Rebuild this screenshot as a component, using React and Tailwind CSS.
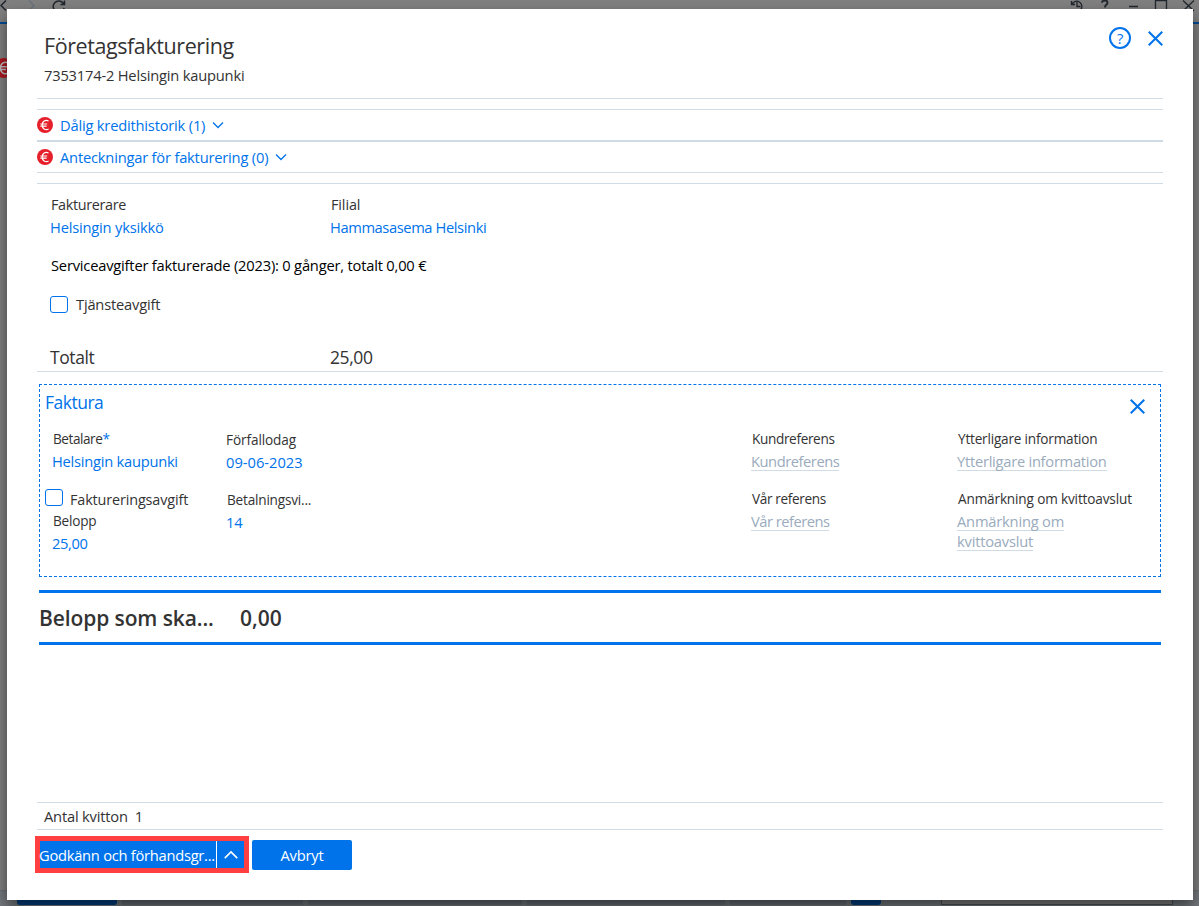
import React from "react";

const EuroBadge = ({ className }) => (
  <svg viewBox="0 0 16 16" className={className}>
    <circle cx="8" cy="8" r="8" fill="#e6202a" />
    <path d="M11.6 4C8.4 2.3 5.2 4.2 5.2 8C5.2 11.8 8.4 13.7 11.6 12M3.4 7H10.2M3.4 9.1H9.6" fill="none" stroke="#fff" strokeWidth="1.2" />
  </svg>
);

const Chevron = ({ className }) => (
  <svg viewBox="0 0 12 8" className={className} fill="none" stroke="currentColor" strokeWidth="1.3">
    <path d="M1 1.5L6 6.5L11 1.5" />
  </svg>
);

const Cross = ({ className }) => (
  <svg viewBox="0 0 16 16" className={className} fill="none" stroke="currentColor" strokeWidth="2.2">
    <path d="M.8 .8L15.2 15.2M15.2 .8L.8 15.2" />
  </svg>
);

const T = ({ className = "", children }) => (
  <span className={`block w-max shrink-0 whitespace-nowrap ${className}`}>{children}</span>
);

const Checkbox = ({ className = "" }) => (
  <span className={`block h-[17px] w-[18px] shrink-0 rounded-[3px] border border-[#0073ea] ${className}`} />
);

// Application window that stays dimmed behind the dialog
const Backdrop = () => (
  <div className="flex h-[906px] w-[1199px] flex-col bg-[#808080]">
    <div className="flex h-[24px] items-start justify-between border-b-2 border-[#004a93] text-[#222]">
      <svg width="70" height="20" viewBox="0 0 70 20" fill="none" strokeWidth="1.5">
        <path d="M6 .5L1 5.5L6 10.5" stroke="#20262d" />
        <path d="M29 .5L34 5.5L29 10.5" stroke="#6a727d" />
        <path d="M63.5 3.5A5.6 5.6 0 1 0 64.2 8M64.5 .5V4.5H60.5" stroke="#20262d" />
      </svg>
      <svg width="130" height="20" viewBox="0 0 130 20" fill="none" stroke="#20262d" strokeWidth="1.3">
        <path d="M2.5 1V4.5H6M3 4.2A5.2 5.2 0 1 1 3.5 9.5M8 2V6.5H11.5" />
        <path d="M33 2.8Q33 .5 36 .5Q38.5 .5 38.5 2.7Q38.5 4 37 5Q36 5.8 36 7.5" strokeWidth="1.8" />
        <path d="M60 6.5H69M86.5 .5H97.5V12H86.5ZM114 .5L125 11M125 .5L114 11" />
      </svg>
    </div>
    <div className="h-[866px] pt-[34px]">
      <EuroBadge className="-ml-[6px] h-[20px] w-[20px] brightness-75" />
    </div>
    <div className="flex h-[16px] border-t border-[#6b7074] bg-[#74797d] pl-[17px]">
      <div className="h-[14px] w-[100px] rounded-b-[3px] bg-[#003f80]" />
      <div className="ml-[5px] h-[14px] w-[181px] bg-[#656d75]" />
      <div className="ml-[5px] h-[14px] w-[214px] bg-[#656d75]" />
      <div className="ml-[5px] h-[14px] w-[198px] bg-[#656d75]" />
      <div className="ml-[5px] h-[14px] w-[116px] bg-[#656d75]" />
      <div className="ml-[5px] h-[14px] w-[30px] rounded-b-[3px] bg-[#003f80]" />
      <div className="ml-[60px] h-[14px] w-[232px] border border-[#4b5055] bg-[#808080]" />
    </div>
  </div>
);

const Placeholder = ({ className = "", children }) => (
  <span className={`block h-[19px] w-max border-b border-[#cfdce6] text-[14.7px] leading-[18px] whitespace-nowrap text-[#9aabbd] ${className}`}>
    {children}
  </span>
);

const App = () => {
  return (
    <div className="relative h-[906px] w-[1199px] overflow-hidden font-['Open_Sans',sans-serif] text-[14.7px] leading-[20px] tracking-[-0.2px] text-[#333]">
      <Backdrop />
      <div className="absolute top-[9px] left-[7px] flex h-[891px] w-[1186px] flex-col bg-white px-[30px] shadow-[0_7px_14px_0_rgba(0,0,0,0.5)]">
        <header className="flex h-[89px] justify-between pt-[18px] pl-[7px]">
          <div>
            <T className="text-[21.5px] leading-[38px] tracking-[-0.42px]">Företagsfakturering</T>
            <T>7353174-2 Helsingin kaupunki</T>
          </div>
          <div className="flex gap-[17px] text-[#0073ea]">
            <span className="flex size-[22px] items-center justify-center rounded-full border-2 border-[#0073ea] text-[14.7px]">?</span>
            <Cross className="mt-[4px] size-[15px]" />
          </div>
        </header>

        {/* Notices */}
        <div className="h-[11px] border-t border-[#cfdce6]" />
        <div className="flex h-[32px] items-center border-y border-[#cfdce6] text-[#0073ea]">
          <EuroBadge className="size-[16px]" />
          <T className="ml-[7px]">Dålig kredithistorik (1)</T>
          <Chevron className="ml-[7px] h-[8px] w-[12px]" />
        </div>
        <div className="flex h-[32px] items-center border-y border-[#cfdce6] text-[#0073ea]">
          <EuroBadge className="size-[16px]" />
          <T className="ml-[7px]">Anteckningar för fakturering (0)</T>
          <Chevron className="ml-[7px] h-[8px] w-[12px]" />
        </div>

        {/* Billing unit */}
        <section className="mt-[10px] h-[189px] border-y border-[#cfdce6] pt-[11px] pl-[13px]">
          <div className="grid grid-cols-[280px_1fr]">
            <T className="ml-px text-[14.4px] tracking-[-0.35px]">Fakturerare</T>
            <T className="ml-px text-[14.4px] tracking-[-0.1px]">Filial</T>
            <T className="mt-[2px] text-[#0073ea]">Helsingin yksikkö</T>
            <T className="mt-[2px] tracking-[-0.4px] text-[#0073ea]">Hammasasema Helsinki</T>
          </div>
          <T className="mt-[18px] ml-px text-black">Serviceavgifter fakturerade (2023): 0 gånger, totalt 0,00 €</T>
          <div className="mt-[19px] flex items-start gap-[8px]">
            <Checkbox className="mt-[2px]" />
            <T>Tjänsteavgift</T>
          </div>
          <div className="mt-[32px] grid grid-cols-[280px_1fr] text-[17.5px] leading-[22px] tracking-[-0.4px]">
            <T>Totalt</T>
            <T>25,00</T>
          </div>
        </section>

        {/* Invoice card */}
        <section className="mx-[2px] mt-[12px] h-[193px] border border-dashed border-[#0073ea] px-[5px] pt-[6px]">
          <div className="flex justify-between pr-[10px] text-[#0073ea]">
            <T className="text-[17.5px] leading-[22px] tracking-[-0.5px]">Faktura</T>
            <Cross className="mt-[8px] size-[15px]" />
          </div>
          <div className="grid grid-cols-[174px_525px_206px_1fr] pt-[15px] pl-[7px] text-[13.6px]">
            <div>
              <T className="ml-px tracking-[-0.45px]">
                Betalare<span className="text-[#0073ea]">*</span>
              </T>
              <T className="mt-[2px] text-[14.7px] tracking-[-0.25px] text-[#0073ea]">Helsingin kaupunki</T>
              <div className="mt-[18px] -ml-[7px] flex gap-[7px]">
                <Checkbox />
                <T className="mt-px text-[14.4px] tracking-[-0.13px]">Faktureringsavgift</T>
              </div>
              <T className="mt-px ml-px">Belopp</T>
              <T className="mt-[2px] text-[14.7px] tracking-[-0.35px] text-[#0073ea]">25,00</T>
            </div>
            <div className="pt-px">
              <T className="tracking-[-0.1px]">Förfallodag</T>
              <T className="mt-[2px] text-[14.7px] tracking-normal text-[#0073ea]">09-06-2023</T>
              <T className="mt-[18px] ml-px">Betalningsvi...</T>
              <T className="mt-[2px] text-[14.7px] text-[#0073ea]">14</T>
            </div>
            <div>
              <T className="ml-px tracking-[-0.35px]">Kundreferens</T>
              <Placeholder className="mt-[3px] tracking-[-0.45px]">Kundreferens</Placeholder>
              <T className="mt-[18px] ml-px tracking-[-0.35px]">Vår referens</T>
              <Placeholder className="mt-[3px] tracking-[-0.5px]">Vår referens</Placeholder>
            </div>
            <div>
              <T className="ml-px">Ytterligare information</T>
              <Placeholder className="mt-[3px] tracking-[-0.26px]">Ytterligare information</Placeholder>
              <T className="mt-[18px] ml-px tracking-[-0.15px]">Anmärkning om kvittoavslut</T>
              <Placeholder className="mt-[3px]">Anmärkning om</Placeholder>
              <Placeholder className="mt-[1px]">kvittoavslut</Placeholder>
            </div>
          </div>
        </section>

        <div className="mx-[2px] mt-[13px] flex h-[55px] items-center border-y-3 border-[#0073ea] text-[21px] font-semibold tracking-[-0.1px]">
          <div className="w-[201px]">
            <T>Belopp som ska...</T>
          </div>
          <T className="tracking-normal">0,00</T>
        </div>

        <footer className="mt-auto mb-[27px]">
          <div className="flex h-[28px] items-center gap-[7px] border-y border-[#cfdce6] pl-[7px]">
            <T>Antal kvitton</T>
            <span>1</span>
          </div>
          <div className="mt-[6px] -ml-[2px] flex items-center gap-[3px] text-white">
            <div className="flex h-[37px] w-[214px] border-[5px] border-[#ff3f40] bg-[#0073ea]">
              <div className="w-[176px] shrink-0">
                <T className="-ml-px leading-[29px] tracking-[-0.26px]">Godkänn och förhandsgr...</T>
              </div>
              <div className="flex flex-1 items-center justify-center border-l border-white">
                <Chevron className="h-[10px] w-[16px] rotate-180" />
              </div>
            </div>
            <div className="flex h-[30px] w-[100px] items-center justify-center rounded-[2px] bg-[#0073ea]">
              <T>Avbryt</T>
            </div>
          </div>
        </footer>
      </div>
    </div>
  );
};

export default App;
